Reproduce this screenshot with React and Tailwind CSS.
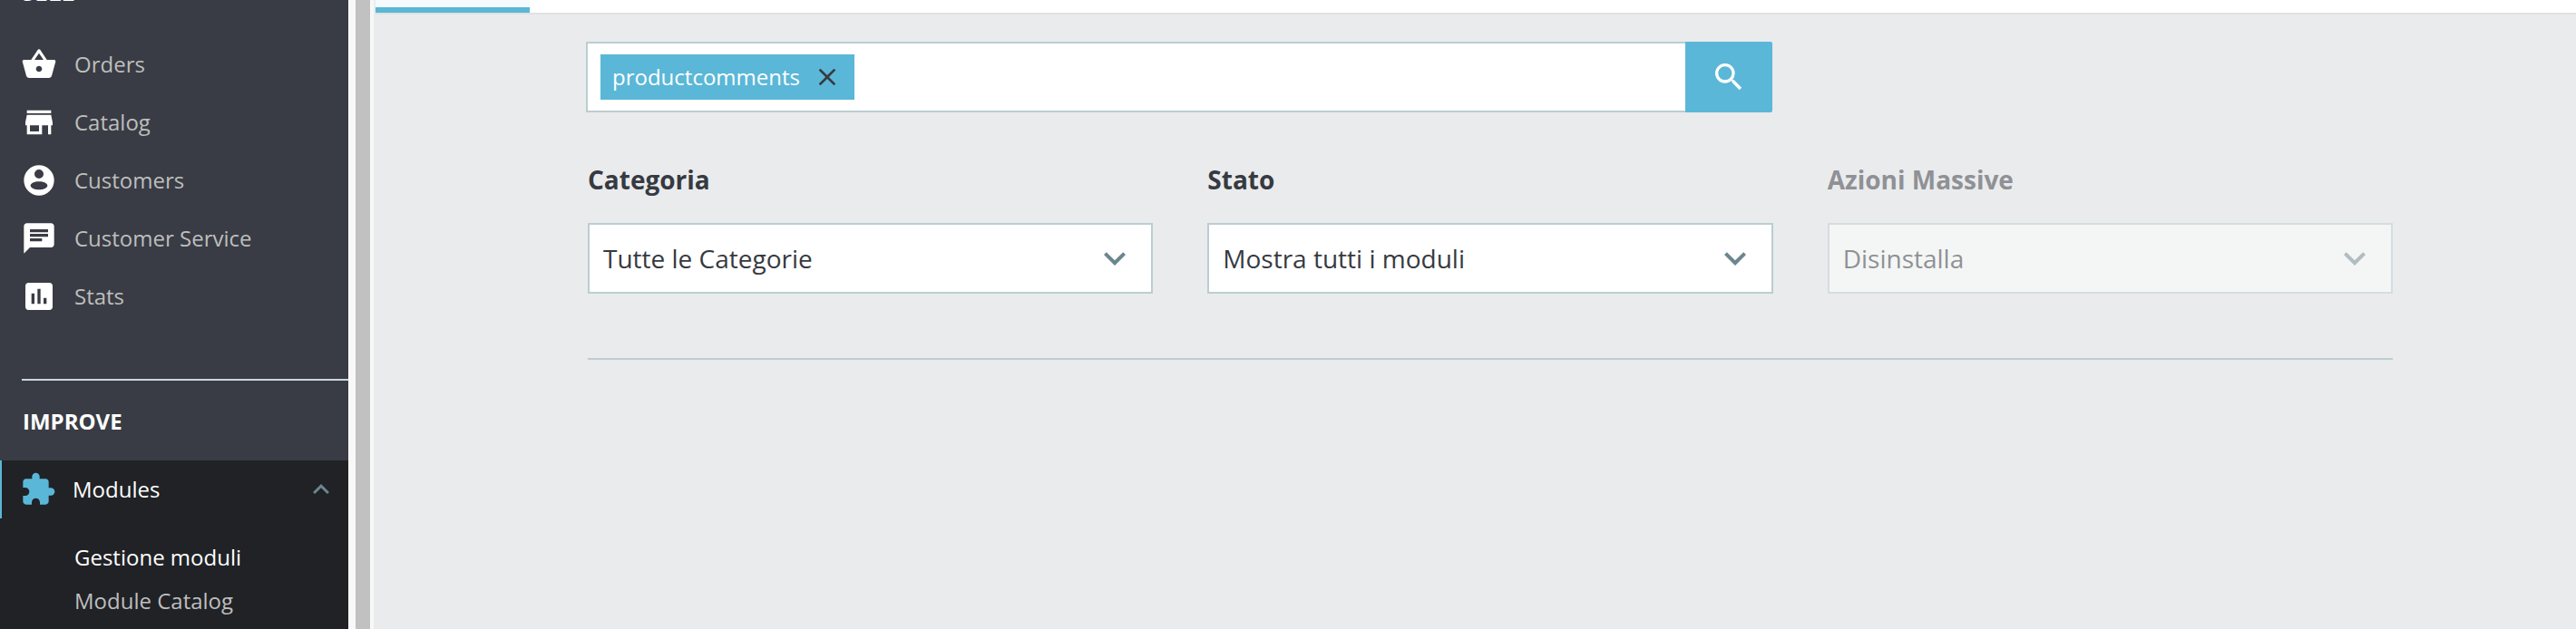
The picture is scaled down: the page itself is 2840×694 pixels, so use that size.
import React from 'react';
import {
  MdShoppingBasket,
  MdStore,
  MdChat,
  MdAssessment,
  MdExtension,
  MdExpandLess,
  MdExpandMore,
  MdSearch,
  MdClose,
} from 'react-icons/md';

// the package's account icon has a different cut-out for the body
const AccountIcon = ({ className }) => (
  <svg viewBox="0 0 24 24" className={className} width="1em" height="1em" fill="currentColor" fillRule="evenodd">
    <path d="M12 2a10 10 0 1 0 0 20a10 10 0 1 0 0-20zM12 4.8a3 3 0 1 1 0 6a3 3 0 1 1 0-6zM12 12.8c3.1 0 5.6 1.2 5.6 2.7s-2.5 2.7-5.6 2.7s-5.6-1.2-5.6-2.7s2.5-2.7 5.6-2.7z" />
  </svg>
);

const sellItems = [
  { label: 'Orders', Icon: MdShoppingBasket },
  { label: 'Catalog', Icon: MdStore },
  { label: 'Customers', Icon: AccountIcon },
  { label: 'Customer Service', Icon: MdChat },
  { label: 'Stats', Icon: MdAssessment },
];

const SelectBox = ({ label, value, disabled }) => (
  <div className={disabled ? 'text-[#8f9195]' : 'text-[#363a41]'}>
    <div className="h-[40px] text-[28px] leading-[40px] font-bold mt-[-2px]">{label}</div>
    <div
      className={`mt-[28px] h-[78px] flex items-center justify-between pl-[15px] pr-[16px] border-2 text-[28px] ${
        disabled ? 'bg-[#f4f6f5] border-[#d3dee2]' : 'bg-white border-[#bbcdd2]'
      }`}
    >
      <span>{value}</span>
      <MdExpandMore className={`text-[48px] ${disabled ? 'text-[#b0bdc1]' : 'text-[#6c868e]'}`} />
    </div>
  </div>
);

const Sidebar = () => (
  <aside className="w-[384px] h-full shrink-0 bg-[#393c44] flex flex-col overflow-hidden">
    <div className="px-[24px] h-[6px] flex items-end text-white text-[26px] leading-[36px] font-bold">
      <span className="mb-[-3px]">SELL</span>
    </div>
    <nav className="mt-[33px] flex flex-col">
      {sellItems.map(({ label, Icon }) => (
        <a key={label} className="h-[64px] flex items-center pl-[23px] text-[#bebebe] text-[24px]">
          <Icon className="text-[40px] text-white shrink-0" />
          <span className="ml-[19px]">{label}</span>
        </a>
      ))}
    </nav>
    <div className="mt-[59px] ml-[24px] h-[2px] bg-[#c8d7dc]" />
    <div className="mt-[27px] h-[36px] pl-[25px] text-white text-[24px] leading-[36px] font-bold">IMPROVE</div>
    <div className="mt-[25px] flex-1 bg-[#202226]">
      <div className="h-[64px] flex items-center pl-[22px] pr-[12px] border-l-2 border-[#5ab7d7] text-white text-[24px]">
        <MdExtension className="text-[40px] text-[#5ab7d7] shrink-0 ml-[-2px]" />
        <span className="ml-[18px] flex-1">Modules</span>
        <MdExpandLess className="text-[36px] text-[#6c868e]" />
      </div>
      <div className="mt-[19px] pl-[82px] text-[24px] leading-[48px]">
        <div className="text-white">Gestione moduli</div>
        <div className="text-[#bebebe]">Module Catalog</div>
      </div>
    </div>
  </aside>
);

export default function App() {
  return (
    <div
      className="w-[2840px] h-[694px] flex overflow-hidden bg-[#eaebed]"
      style={{ fontFamily: '"Open Sans", sans-serif' }}
    >
      <Sidebar />
      {/* window splitter between the menu and the page */}
      <div className="w-[28px] h-full shrink-0 bg-[#f8f8f8] px-[8px] pr-[4px]">
        <div className="w-[16px] h-full bg-[#c1c1c1]" />
      </div>
      <main className="flex-1 min-w-0">
        <div className="ml-[2px] h-[16px] bg-white border-b-2 border-[#dfe1e3]">
          <div className="w-[170px] h-[14px] bg-[#f5fafc] border-b-[6px] border-[#5ab7d7]" />
        </div>
        <div className="ml-[236px] w-[1990px]">
          <div className="mt-[30px] ml-[-2px] w-[1308px] h-[78px] flex">
            <div className="flex-1 bg-white border-2 border-r-0 border-[#bbcdd2] pl-[14px] pt-[12px]">
              <div className="inline-flex items-center h-[50px] w-[280px] bg-[#5ab7d7] pl-[13px] text-white text-[24px]">
                <span>productcomments</span>
                <MdClose className="ml-[14px] text-[32px] text-[#363a41]" />
              </div>
            </div>
            <button className="w-[96px] flex items-center justify-center bg-[#5ab7d7] rounded-r-[2px]">
              <MdSearch className="text-[40px] text-white" />
            </button>
          </div>
          <div className="mt-[56px] grid grid-cols-3 gap-[60px]">
            <SelectBox label="Categoria" value="Tutte le Categorie" />
            <SelectBox label="Stato" value="Mostra tutti i moduli" />
            <SelectBox label="Azioni Massive" value="Disinstalla" disabled />
          </div>
          <div className="mt-[71px] h-[2px] bg-[#bbcdd2]" />
        </div>
      </main>
    </div>
  );
}
